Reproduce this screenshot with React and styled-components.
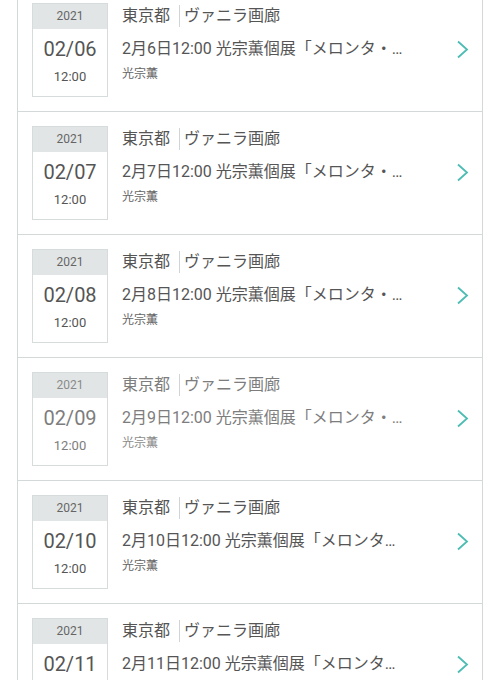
import React from "react";
import styled, { createGlobalStyle } from "styled-components";

const GlobalStyle = createGlobalStyle`
  body {
    margin: 0;
    background: #ffffff;
    font-family: Roboto, "Noto Sans CJK JP", sans-serif;
  }
`;

const Page = styled.div`
  height: 680px;
  overflow: hidden;
`;

const List = styled.div`
  margin: -11px 17px 0;
  border-left: 1px solid #d3d8d9;
  border-right: 1px solid #d3d8d9;
`;

const Row = styled.div`
  display: flex;
  align-items: flex-start;
  height: 108px;
  padding: 14px 13px 0 14px;
  border-bottom: 1px solid #d3d8d9;
  box-sizing: content-box;
  color: ${(p) => (p.$muted ? "#7d7d7d" : "#555555")};
`;

const DateBox = styled.div`
  flex: none;
  width: 74px;
  height: 92px;
  border: 1px solid #d6dbdc;
  display: flex;
  flex-direction: column;
  align-items: center;
`;

const Year = styled.div`
  width: 100%;
  height: 25px;
  background: #dfe3e4;
  font-size: 12px;
  line-height: 25px;
  text-align: center;
  opacity: 0.9;
`;

const Day = styled.div`
  margin-top: 6px;
  font-size: 20px;
  line-height: 28px;
`;

const Time = styled.div`
  margin-top: 5px;
  font-size: 13px;
  line-height: 18px;
`;

const Info = styled.div`
  margin-left: 14px;
  width: 284px;
`;

const Place = styled.div`
  display: flex;
  align-items: center;
  font-size: 16px;
  line-height: 26px;
`;

const Divider = styled.span`
  width: 1px;
  height: 22px;
  margin: 0 4px 0 9px;
  background: #d0d4d5;
`;

const Title = styled.div`
  margin-top: 7px;
  font-size: 16px;
  line-height: 26px;
  white-space: nowrap;
  overflow: hidden;
  text-overflow: ellipsis;
`;

const Artist = styled.div`
  margin-top: 3px;
  font-size: 12px;
  line-height: 18px;
  opacity: 0.9;
`;

const Chevron = styled.svg`
  align-self: center;
  margin-left: auto;
  margin-top: -16px;
  flex: none;
`;

const events = [
  { day: "06" },
  { day: "07" },
  { day: "08" },
  { day: "09", muted: true },
  { day: "10" },
  { day: "11" },
];

export default function App() {
  return (
    <Page>
      <GlobalStyle />
      <List>
        {events.map((e) => (
          <Row key={e.day} $muted={e.muted}>
            <DateBox>
              <Year>2021</Year>
              <Day>02/{e.day}</Day>
              <Time>12:00</Time>
            </DateBox>
            <Info>
              <Place>
                東京都
                <Divider />
                ヴァニラ画廊
              </Place>
              <Title>
                2月{Number(e.day)}日12:00 光宗薫個展「メロンタ・タウタ」
              </Title>
              <Artist>光宗薫</Artist>
            </Info>
            <Chevron width="13" height="19" viewBox="0 0 13 19">
              <polyline
                points="2,1.5 11,9.5 2,17.5"
                fill="none"
                stroke="#4dbcb4"
                strokeWidth="1.8"
              />
            </Chevron>
          </Row>
        ))}
      </List>
    </Page>
  );
}
